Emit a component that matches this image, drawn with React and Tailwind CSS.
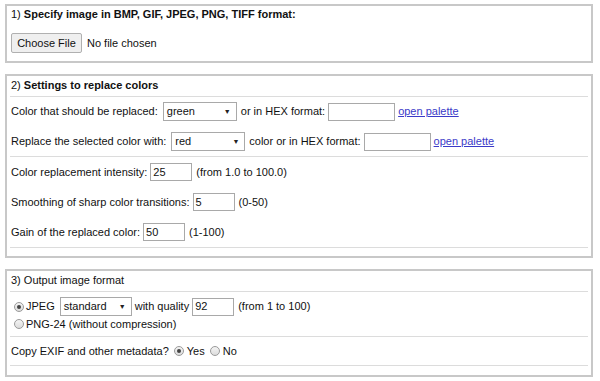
import React from "react";

const font = { fontFamily: '"Liberation Sans", Arial, sans-serif' };

function Select({ value, w }) {
  return (
    <div
      className="ml-[5px] flex h-[19px] items-center justify-between border border-[#a9a9a9] bg-white pl-[3px] pr-[5px] text-[11px] text-[#111]"
      style={{ width: w }}
    >
      <span>{value}</span>
      <span className="text-[7px] leading-none text-[#222]">▼</span>
    </div>
  );
}

function Input({ value = "", w, className = "" }) {
  return (
    <div
      className={`flex h-[18px] items-center border border-[#a9a9a9] bg-white pl-[2px] text-[11px] text-[#111] ${className}`}
      style={{ width: w }}
    >
      {value}
    </div>
  );
}

function Radio({ checked }) {
  return (
    <span className="flex h-[10px] w-[10px] items-center justify-center rounded-full border border-[#9a9a9a] bg-gradient-to-b from-[#f4f4f4] to-[#dcdcdc]">
      {checked && <span className="h-[4px] w-[4px] rounded-full bg-[#444]" />}
    </span>
  );
}

function Sep() {
  return <div className="border-t border-[#dcdcdc]" />;
}

function Link({ children }) {
  return <span className="ml-[3px] text-[#3a3ac8] underline">{children}</span>;
}

export default function App() {
  return (
    <div className="min-h-[381px] w-[600px] bg-white pl-[5px] pt-[4px] text-[11px] text-[#111]" style={font}>
      {/* Box 1 */}
      <div className="w-[588px] border-2 border-[#c8c8c8] px-[3px]">
        <div className="h-[16px] pl-[1px] leading-[16px]">
          1) <b>Specify image in BMP, GIF, JPEG, PNG, TIFF format:</b>
        </div>
        <div className="mt-[11px] mb-[8px] flex h-[20px] items-center pl-[1px]">
          <div className="flex h-[20px] w-[71px] items-center justify-center rounded-[2px] border border-[#b0b0b0] bg-[#efefef] text-[11px]">
            Choose File
          </div>
          <span className="ml-[5px]">No file chosen</span>
        </div>
      </div>

      {/* Box 2 */}
      <div className="mt-[11px] w-[588px] border-2 border-[#c8c8c8] px-[3px] pb-[8px]">
        <div className="h-[16px] pt-[1px] pl-[1px] leading-[16px]">
          2) <b>Settings to replace colors</b>
        </div>
        <div className="mt-[4px]">
          <Sep />
        </div>
        <div className="mt-[5px] flex h-[19px] items-center pl-[1px]">
          <span>Color that should be replaced:</span>
          <Select value="green" w={74} />
          <span className="ml-[4px]">or in HEX format:</span>
          <Input w={67} className="ml-[3px]" />
          <Link>open palette</Link>
        </div>
        <div className="mt-[11px] flex h-[19px] items-center pl-[1px]">
          <span>Replace the selected color with:</span>
          <Select value="red" w={74} />
          <span className="ml-[4px]">color or in HEX format:</span>
          <Input w={67} className="ml-[3px]" />
          <Link>open palette</Link>
        </div>
        <div className="mt-[5px]">
          <Sep />
        </div>
        <div className="mt-[6px] flex h-[18px] items-center pl-[1px]">
          <span>Color replacement intensity:</span>
          <Input value="25" w={42} className="ml-[3px]" />
          <span className="ml-[4px]">(from 1.0 to 100.0)</span>
        </div>
        <div className="mt-[12px] flex h-[18px] items-center pl-[1px]">
          <span>Smoothing of sharp color transitions:</span>
          <Input value="5" w={42} className="ml-[3px]" />
          <span className="ml-[4px]">(0-50)</span>
        </div>
        <div className="mt-[12px] flex h-[18px] items-center pl-[1px]">
          <span>Gain of the replaced color:</span>
          <Input value="50" w={42} className="ml-[3px]" />
          <span className="ml-[4px]">(1-100)</span>
        </div>
        <div className="mt-[6px]">
          <Sep />
        </div>
      </div>

      {/* Box 3 */}
      <div className="mt-[11px] w-[588px] border-2 border-[#c8c8c8] px-[3px] pb-[9px]">
        <div className="h-[16px] pt-[1px] pl-[1px] leading-[16px]">3) Output image format</div>
        <div className="mt-[4px]">
          <Sep />
        </div>
        <div className="mt-[5px] flex h-[19px] items-center pl-[4px]">
          <Radio checked />
          <span className="ml-[2px]">JPEG</span>
          <Select value="standard" w={72} />
          <span className="ml-[3px]">with quality</span>
          <Input value="92" w={42} className="ml-[3px]" />
          <span className="ml-[4px]">(from 1 to 100)</span>
        </div>
        <div className="flex h-[16px] items-center pl-[4px]">
          <Radio />
          <span className="ml-[2px]">PNG-24 (without compression)</span>
        </div>
        <div className="mt-[4px]">
          <Sep />
        </div>
        <div className="mt-[5px] flex h-[18px] items-center pl-[1px]">
          <span>Copy EXIF and other metadata?</span>
          <span className="ml-[5px]">
            <Radio checked />
          </span>
          <span className="ml-[3px]">Yes</span>
          <span className="ml-[5px]">
            <Radio />
          </span>
          <span className="ml-[3px]">No</span>
        </div>
        <div className="mt-[5px]">
          <Sep />
        </div>
      </div>
    </div>
  );
}
